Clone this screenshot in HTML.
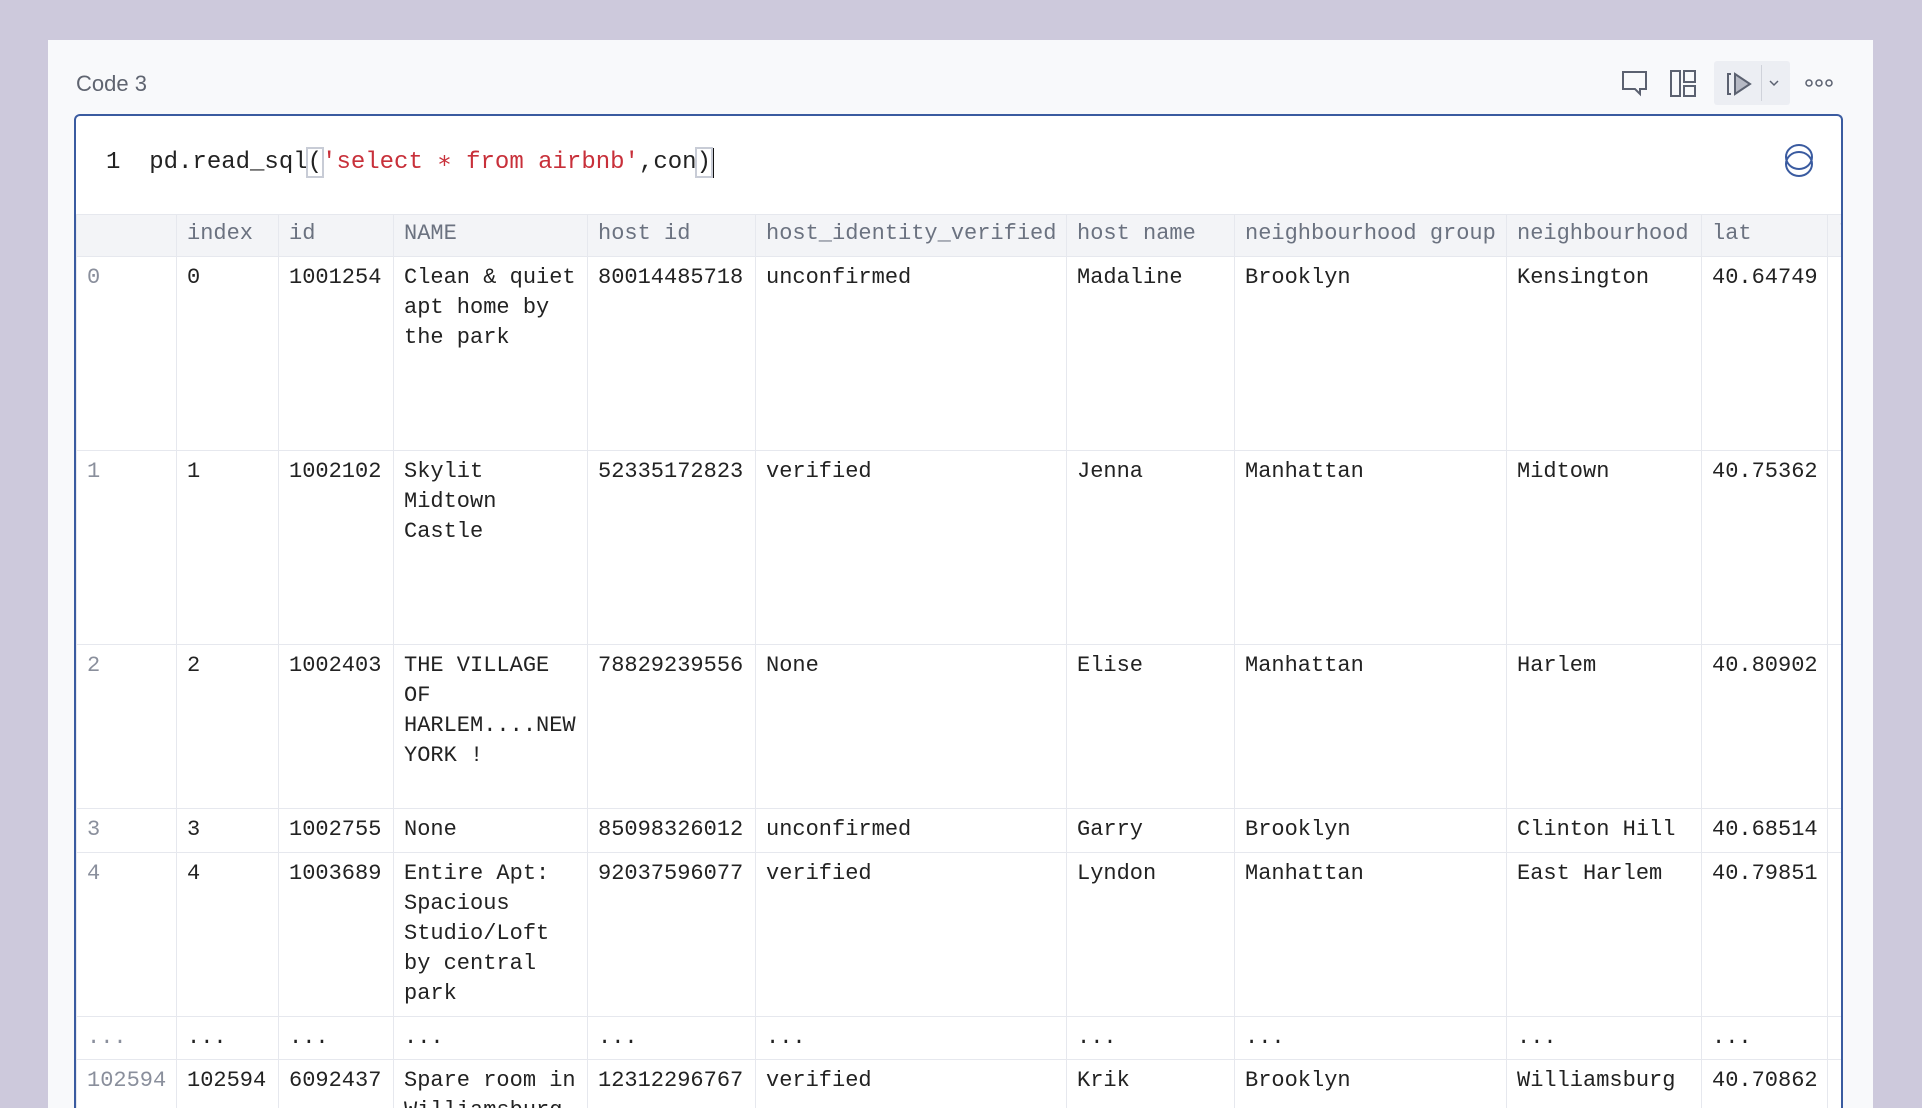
<!DOCTYPE html>
<html><head><meta charset="utf-8"><style>
*{box-sizing:border-box;margin:0;padding:0}
html{width:1922px;height:1108px;overflow:hidden}
body{width:1922px;height:1108px;background:#cdc9dc;overflow:hidden;font-family:"Liberation Sans",sans-serif;position:relative}
.panel{position:absolute;left:48px;top:40px;width:1825px;height:1068px;background:#f8f9fb}
.title{position:absolute;left:76px;top:71px;font-size:22px;color:#5f6470}
.box{position:absolute;left:74px;top:114px;width:1769px;height:994px;border:2px solid #3a5ba0;border-bottom:none;border-radius:6px 6px 0 0;background:#fff;overflow:hidden}
.code{position:absolute;left:30px;top:32px;font-family:"Liberation Mono",monospace;font-size:24px;color:#222;white-space:pre;line-height:30px}
.code .s{color:#c8303a}
.code .b{outline:2px solid #c8ccd6}
.cur{display:inline-block;width:3px;height:30px;background:#111;vertical-align:top}
table{position:absolute;left:0;top:98px;width:1901px;border-collapse:collapse;table-layout:fixed;font-family:"Liberation Mono",monospace;font-size:22px;color:#222}
td,th{border:1px solid #e6e8ee;padding:6px 10px 0 10px;line-height:30px;vertical-align:top;text-align:left;font-weight:normal;overflow:hidden;white-space:normal;word-break:normal}
th{background:#f3f4f7;color:#6b7280;height:42px;white-space:nowrap;padding-top:4px}
td.i{color:#8a8f9c;background:#fff}
tr.r0 td{height:194px}tr.r1 td{height:194px}tr.r2 td{height:164px}tr.r3 td{height:44px}tr.r4 td{height:164px}tr.rd td{height:43px}
td{white-space:nowrap}td.w{white-space:normal}
</style></head><body>
<div class="panel"></div>
<div class="title">Code 3</div>
<svg style="position:absolute;left:1620px;top:68px" width="30" height="30" viewBox="0 0 30 30" fill="none" stroke="#5b6170" stroke-width="2"><path d="M3 4h23v17h-6l0 5-5-5H3z"/></svg>
<svg style="position:absolute;left:1670px;top:70px" width="26" height="27" viewBox="0 0 26 27" fill="none" stroke="#5b6170" stroke-width="2"><rect x="1" y="1" width="9" height="25"/><rect x="14" y="1" width="11" height="11"/><rect x="14" y="16" width="11" height="10"/></svg>
<div style="position:absolute;left:1714px;top:61px;width:76px;height:44px;background:#eceef3;border-radius:3px"></div>
<div style="position:absolute;left:1761px;top:65px;width:1px;height:36px;background:#cfd2da"></div>
<svg style="position:absolute;left:1725px;top:71px" width="28" height="26" viewBox="0 0 28 26" fill="none" stroke="#5b6170" stroke-width="2"><path d="M6 3H3v20h3"/><path d="M10 3l15 10-15 10z" fill="#b6b9c4"/></svg>
<svg style="position:absolute;left:1768px;top:78px" width="12" height="10" viewBox="0 0 12 10" fill="none" stroke="#5b6170" stroke-width="1.5"><path d="M2 3l4 4 4-4"/></svg>
<svg style="position:absolute;left:1805px;top:77px" width="28" height="12" viewBox="0 0 28 12" fill="none" stroke="#5b6170" stroke-width="1.5"><circle cx="4" cy="6" r="3"/><circle cx="14" cy="6" r="3"/><circle cx="24" cy="6" r="3"/></svg>
<div class="box">
<div class="code">1  pd.read_sql<span class="b">(</span><span class="s">'select ∗ from airbnb'</span>,con<span class="b">)</span><span class="cur"></span></div>
<svg style="position:absolute;left:1707px;top:26px" width="32" height="38" viewBox="0 0 32 38" fill="none" stroke="#3a5ba0" stroke-width="2"><ellipse cx="16" cy="15" rx="13" ry="12"/><ellipse cx="16" cy="22" rx="13" ry="12"/></svg>
<table>
<colgroup><col style="width:100px"><col style="width:102px"><col style="width:115px"><col style="width:194px"><col style="width:168px"><col style="width:311px"><col style="width:168px"><col style="width:272px"><col style="width:195px"><col style="width:126px"><col style="width:150px"></colgroup>
<tr><th></th><th>index</th><th>id</th><th>NAME</th><th>host id</th><th>host_identity_verified</th><th>host name</th><th>neighbourhood group</th><th>neighbourhood</th><th>lat</th><th>long</th></tr>
<tr class="r0"><td class="i">0</td><td>0</td><td>1001254</td><td class="w">Clean &amp; quiet apt home by the park</td><td>80014485718</td><td>unconfirmed</td><td>Madaline</td><td>Brooklyn</td><td>Kensington</td><td>40.64749</td><td>-73.97237</td></tr>
<tr class="r1"><td class="i">1</td><td>1</td><td>1002102</td><td class="w">Skylit Midtown Castle</td><td>52335172823</td><td>verified</td><td>Jenna</td><td>Manhattan</td><td>Midtown</td><td>40.75362</td><td>-73.98377</td></tr>
<tr class="r2"><td class="i">2</td><td>2</td><td>1002403</td><td class="w">THE VILLAGE OF HARLEM....NEW YORK !</td><td>78829239556</td><td>None</td><td>Elise</td><td>Manhattan</td><td>Harlem</td><td>40.80902</td><td>-73.94190</td></tr>
<tr class="r3"><td class="i">3</td><td>3</td><td>1002755</td><td>None</td><td>85098326012</td><td>unconfirmed</td><td>Garry</td><td>Brooklyn</td><td>Clinton Hill</td><td>40.68514</td><td>-73.95976</td></tr>
<tr class="r4"><td class="i">4</td><td>4</td><td>1003689</td><td class="w">Entire Apt: Spacious Studio/Loft by central park</td><td>92037596077</td><td>verified</td><td>Lyndon</td><td>Manhattan</td><td>East Harlem</td><td>40.79851</td><td>-73.94399</td></tr>
<tr class="rd"><td class="i">...</td><td>...</td><td>...</td><td>...</td><td>...</td><td>...</td><td>...</td><td>...</td><td>...</td><td>...</td><td>...</td></tr>
<tr><td class="i">102594</td><td>102594</td><td>6092437</td><td class="w">Spare room in Williamsburg</td><td>12312296767</td><td>verified</td><td>Krik</td><td>Brooklyn</td><td>Williamsburg</td><td>40.70862</td><td>-73.94651</td></tr>
</table>
</div>
</body></html>
